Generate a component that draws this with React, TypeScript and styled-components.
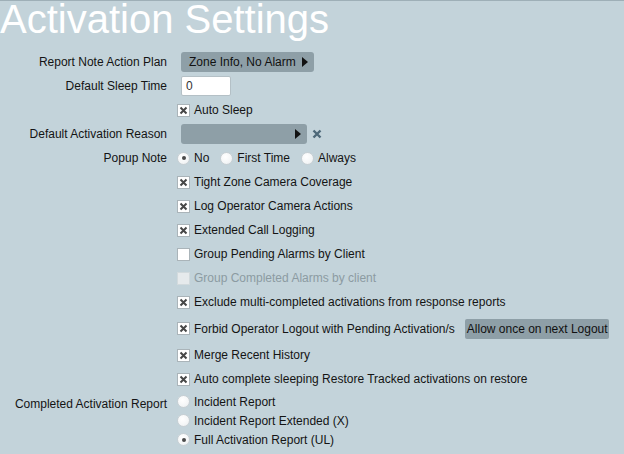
import React from "react";
import styled, { createGlobalStyle } from "styled-components";

const Global = createGlobalStyle`
  html, body { margin: 0; padding: 0; background: #c3d3da; }
  body { font-family: "Liberation Sans", Arial, sans-serif; }
`;

const Page = styled.div`
  min-height: 454px;
  background: #c3d3da;
  border-top: 1px solid #9eafb7;
  box-sizing: border-box;
  font-family: "Liberation Sans", Arial, sans-serif;
  font-size: 12px;
  color: #141414;
`;

const Title = styled.h1`
  margin: 0;
  font-family: "Liberation Sans", Arial, sans-serif;
  font-weight: normal;
  font-size: 40px;
  line-height: 36px;
  color: #ffffff;
  padding-left: 0;
`;

const Form = styled.div`
  display: flex;
  flex-direction: column;
  padding-top: 13px;
`;

const Row = styled.div<{ $h?: number; $mt?: number }>`
  display: flex;
  align-items: flex-start;
  min-height: ${(p) => p.$h ?? 24}px;
  margin-top: ${(p) => p.$mt ?? 0}px;
`;

const Label = styled.div`
  width: 167px;
  flex: 0 0 167px;
  text-align: right;
  line-height: 24px;
  margin-right: 10px;
  white-space: nowrap;
`;

const Control = styled.div<{ $h?: number }>`
  display: flex;
  align-items: center;
  min-height: ${(p) => p.$h ?? 24}px;
  white-space: nowrap;
`;

const Stack = styled.div`
  display: flex;
  flex-direction: column;
`;

const DropButton = styled.div<{ $w: number }>`
  margin-left: 4px;
  width: ${(p) => p.$w}px;
  height: 20px;
  box-sizing: border-box;
  background: #8e9fa7;
  border-radius: 3px;
  display: flex;
  align-items: center;
  justify-content: space-between;
  padding: 0 6px 0 8px;
  color: #111;
`;

const Tri = styled.span`
  width: 0;
  height: 0;
  border-top: 5px solid transparent;
  border-bottom: 5px solid transparent;
  border-left: 6px solid #111;
`;

const TextInput = styled.div`
  margin-left: 4px;
  width: 50px;
  height: 20px;
  box-sizing: border-box;
  background: #fff;
  border: 1px solid #b4c0c6;
  border-radius: 2px;
  padding-left: 4px;
  line-height: 18px;
  color: #333;
`;

const ClearX = styled.svg`
  margin-left: 5px;
`;

const Box = styled.span<{ $disabled?: boolean }>`
  width: 13px;
  height: 13px;
  box-sizing: border-box;
  border: 1px solid ${(p) => (p.$disabled ? "#d2dadd" : "#aab4b9")};
  background: ${(p) => (p.$disabled ? "#e6eaec" : "#ffffff")};
  display: inline-flex;
  align-items: center;
  justify-content: center;
  flex: 0 0 13px;
`;

const Circle = styled.span`
  width: 13px;
  height: 13px;
  box-sizing: border-box;
  border-radius: 50%;
  border: 1px solid #c8d0d4;
  background: radial-gradient(circle at 40% 35%, #ffffff 0%, #f4f6f7 60%, #e2e7ea 100%);
  display: inline-flex;
  align-items: center;
  justify-content: center;
  flex: 0 0 13px;
`;

const Dot = styled.span`
  width: 4px;
  height: 4px;
  border-radius: 50%;
  background: #4a4a4a;
`;

const OptText = styled.span<{ $disabled?: boolean }>`
  margin-left: 4px;
  color: ${(p) => (p.$disabled ? "#8c9ba2" : "#141414")};
`;

const RadioItem = styled.span`
  display: inline-flex;
  align-items: center;
  margin-right: 11px;
`;

const GreyButton = styled.div`
  margin-left: 10px;
  height: 20px;
  box-sizing: border-box;
  background: #8e9fa7;
  border-radius: 2px;
  padding: 0 1px 0 2px;
  line-height: 20px;
  color: #111;
`;

const RadioRow = styled.div`
  display: flex;
  align-items: center;
  height: 19px;
`;

const Check: React.FC<{ checked?: boolean; disabled?: boolean; label: string }> = ({
  checked,
  disabled,
  label,
}) => (
  <>
    <Box $disabled={disabled}>
      {checked && (
        <svg width="9" height="9" viewBox="0 0 9 9">
          <path d="M1.5 1.5 L7.5 7.5 M7.5 1.5 L1.5 7.5" stroke="#474747" strokeWidth="2" />
        </svg>
      )}
    </Box>
    <OptText $disabled={disabled}>{label}</OptText>
  </>
);

const Radio: React.FC<{ checked?: boolean; label: string }> = ({ checked, label }) => (
  <RadioItem>
    <Circle>{checked && <Dot />}</Circle>
    <OptText>{label}</OptText>
  </RadioItem>
);

const checks: { label: string; checked: boolean; disabled?: boolean }[] = [
  { label: "Tight Zone Camera Coverage", checked: true },
  { label: "Log Operator Camera Actions", checked: true },
  { label: "Extended Call Logging", checked: true },
  { label: "Group Pending Alarms by Client", checked: false },
  { label: "Group Completed Alarms by client", checked: false, disabled: true },
  { label: "Exclude multi-completed activations from response reports", checked: true },
];

export default function App() {
  return (
    <Page>
      <Global />
      <Title>Activation Settings</Title>
      <Form>
        <Row>
          <Label>Report Note Action Plan</Label>
          <Control>
            <DropButton $w={133}>
              <span>Zone Info, No Alarm</span>
              <Tri />
            </DropButton>
          </Control>
        </Row>
        <Row>
          <Label>Default Sleep Time</Label>
          <Control>
            <TextInput>0</TextInput>
          </Control>
        </Row>
        <Row>
          <Label />
          <Control>
            <Check checked label="Auto Sleep" />
          </Control>
        </Row>
        <Row>
          <Label>Default Activation Reason</Label>
          <Control>
            <DropButton $w={126}>
              <span />
              <Tri />
            </DropButton>
            <ClearX width="10" height="10" viewBox="0 0 10 10">
              <path d="M1.5 1.5 L8.5 8.5 M8.5 1.5 L1.5 8.5" stroke="#4d6878" strokeWidth="2.4" />
            </ClearX>
          </Control>
        </Row>
        <Row>
          <Label>Popup Note</Label>
          <Control>
            <Radio checked label="No" />
            <Radio label="First Time" />
            <Radio label="Always" />
          </Control>
        </Row>
        {checks.map((c) => (
          <Row key={c.label}>
            <Label />
            <Control>
              <Check checked={c.checked} disabled={c.disabled} label={c.label} />
            </Control>
          </Row>
        ))}
        <Row $h={29}>
          <Label />
          <Control $h={29}>
            <Check checked label="Forbid Operator Logout with Pending Activation/s" />
            <GreyButton>Allow once on next Logout</GreyButton>
          </Control>
        </Row>
        <Row>
          <Label />
          <Control>
            <Check checked label="Merge Recent History" />
          </Control>
        </Row>
        <Row>
          <Label />
          <Control>
            <Check checked label="Auto complete sleeping Restore Tracked activations on restore" />
          </Control>
        </Row>
        <Row $mt={1}>
          <Label>Completed Activation Report</Label>
          <Stack>
            <RadioRow>
              <Radio label="Incident Report" />
            </RadioRow>
            <RadioRow>
              <Radio label="Incident Report Extended (X)" />
            </RadioRow>
            <RadioRow>
              <Radio checked label="Full Activation Report (UL)" />
            </RadioRow>
          </Stack>
        </Row>
      </Form>
    </Page>
  );
}
